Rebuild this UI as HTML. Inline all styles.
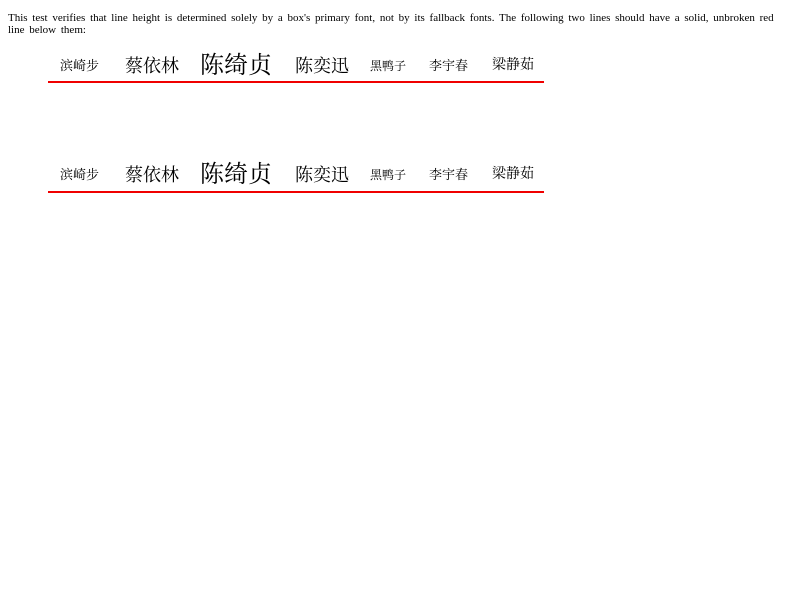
<!DOCTYPE html>
<html><head><meta charset="utf-8"><style>
body{margin:0;background:#fff;font-family:"Liberation Serif",serif;}
p{position:absolute;left:8px;top:12px;margin:0;font-size:11px;line-height:12px;white-space:nowrap;word-spacing:2px;}
.r{position:absolute;left:48px;width:496px;height:2px;background:#f00000;}
.c{position:absolute;font-family:"Liberation Serif","Noto Serif CJK SC",serif;white-space:nowrap;line-height:1;color:#000;}
</style></head><body>
<p>This test verifies that line height is determined solely by a box's primary font, not by its fallback fonts. The following two lines should have a solid, unbroken red<br>line below them:</p>

<div class="c" style="left:60px;top:59px;font-size:13px">滨崎步</div>
<div class="c" style="left:125px;top:57px;font-size:18px">蔡依林</div>
<div class="c" style="left:200px;top:54px;font-size:24px">陈绮贞</div>
<div class="c" style="left:295px;top:57px;font-size:18px">陈奕迅</div>
<div class="c" style="left:370px;top:60px;font-size:12px">黑鸭子</div>
<div class="c" style="left:429px;top:59px;font-size:13px">李宇春</div>
<div class="c" style="left:492px;top:59px;font-size:14px">梁静茹</div>
<div class="r" style="top:81px"></div>

<div class="c" style="left:60px;top:168px;font-size:13px">滨崎步</div>
<div class="c" style="left:125px;top:166px;font-size:18px">蔡依林</div>
<div class="c" style="left:200px;top:163px;font-size:24px">陈绮贞</div>
<div class="c" style="left:295px;top:166px;font-size:18px">陈奕迅</div>
<div class="c" style="left:370px;top:169px;font-size:12px">黑鸭子</div>
<div class="c" style="left:429px;top:168px;font-size:13px">李宇春</div>
<div class="c" style="left:492px;top:168px;font-size:14px">梁静茹</div>
<div class="r" style="top:191px"></div>
</body></html>
